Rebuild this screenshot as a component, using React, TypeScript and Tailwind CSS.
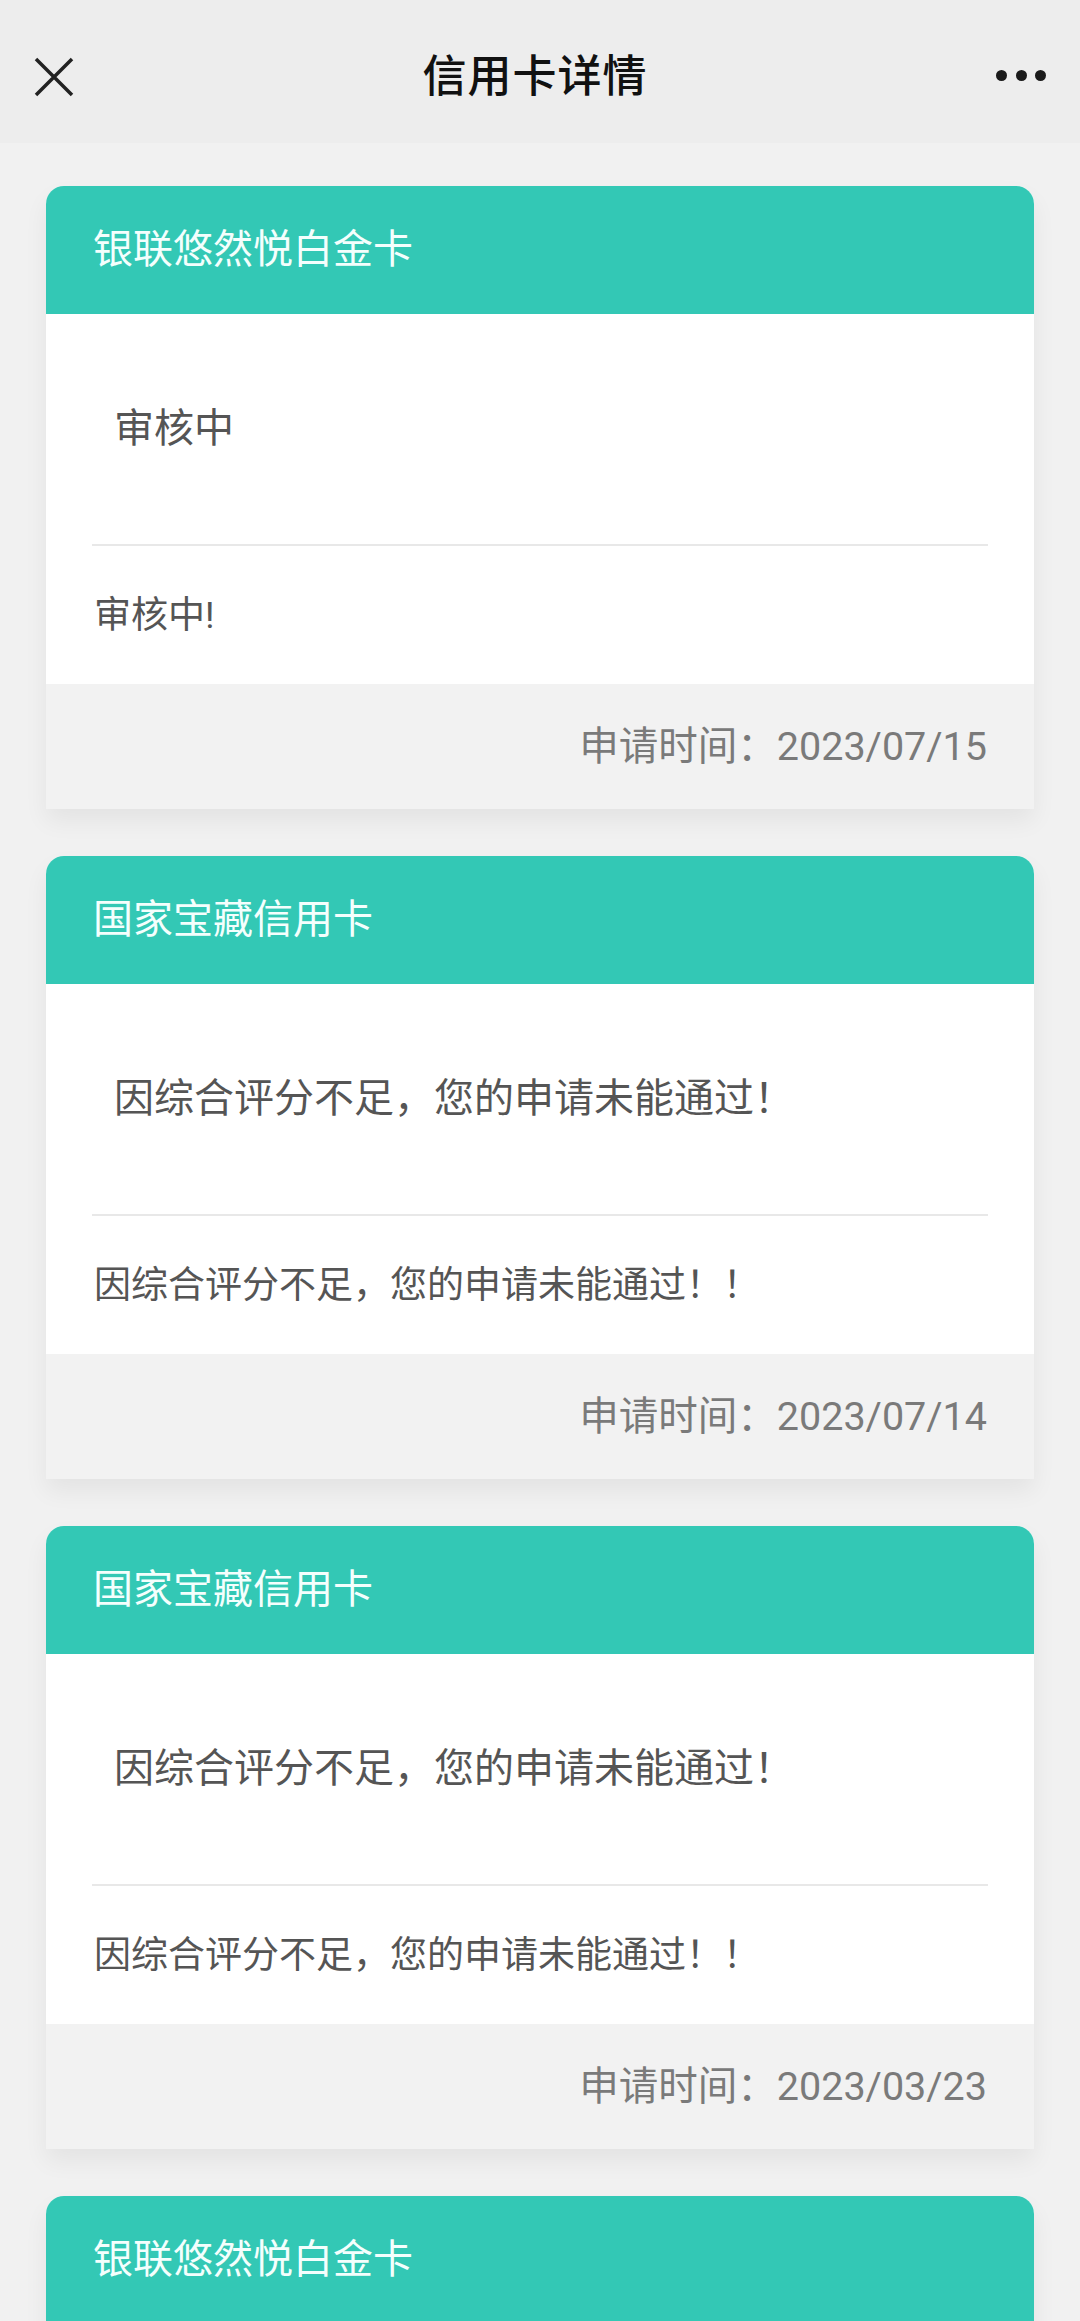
import React from "react";

type Item = {
  name: string;
  status?: string;
  detail?: string;
  date?: string;
};

const items: Item[] = [
  { name: "银联悠然悦白金卡", status: "审核中", detail: "审核中!", date: "2023/07/15" },
  {
    name: "国家宝藏信用卡",
    status: "因综合评分不足，您的申请未能通过！",
    detail: "因综合评分不足，您的申请未能通过！！",
    date: "2023/07/14",
  },
  {
    name: "国家宝藏信用卡",
    status: "因综合评分不足，您的申请未能通过！",
    detail: "因综合评分不足，您的申请未能通过！！",
    date: "2023/03/23",
  },
  { name: "银联悠然悦白金卡" },
];

function Card({ item }: { item: Item }) {
  return (
    <div className="flex flex-col rounded-t-[18px] overflow-hidden bg-white shadow-[0_12px_24px_rgba(0,0,0,0.06)]">
      <div className="h-[128px] shrink-0 bg-[#33c8b5] px-[47px] flex items-center text-[40px] leading-none text-[#f4fffd]">
        {item.name}
      </div>
      {item.status ? (
        <>
          <div className="h-[230px] shrink-0 flex items-center pl-[68px] pr-[46px] text-[40px] leading-none text-[#555555]">
            {item.status}
          </div>
          <div className="mx-[46px] h-[2px] shrink-0 bg-[#e8e8e8]" />
          <div className="h-[138px] shrink-0 flex items-center px-[48px] text-[37px] leading-none text-[#555555]">
            {item.detail}
          </div>
          <div className="h-[125px] shrink-0 bg-[#f2f2f2] flex items-center justify-end pr-[47px] text-[39.5px] leading-none text-[#7a7a7a]">
            申请时间：{item.date}
          </div>
        </>
      ) : (
        <div className="h-[80px] shrink-0 bg-white" />
      )}
    </div>
  );
}

export default function App() {
  return (
    <div
      className="h-[2321px] w-full overflow-hidden bg-[#f1f1f1]"
      style={{ fontFamily: 'Roboto, "Noto Sans CJK SC", sans-serif' }}
    >
      <div className="h-[143px] bg-[#ededed] pt-[10px] px-[34px] flex items-center justify-between">
        <div className="w-[40px] h-[40px] flex items-center justify-center">
          <svg width="40" height="40" viewBox="0 0 40 40" fill="none">
            <path d="M2 2 L38 38 M38 2 L2 38" stroke="#222222" strokeWidth="3.5" strokeLinecap="butt" />
          </svg>
        </div>
        <div className="text-[44px] font-medium text-[#111111] leading-none tracking-[1px]">
          信用卡详情
        </div>
        <div className="w-[50px] h-[40px] flex items-center justify-between -mt-[2px]">
          <span className="w-[11px] h-[11px] rounded-full bg-[#1a1a1a]" />
          <span className="w-[11px] h-[11px] rounded-full bg-[#1a1a1a]" />
          <span className="w-[11px] h-[11px] rounded-full bg-[#1a1a1a]" />
        </div>
      </div>
      <div className="px-[46px] pt-[43px] pb-[47px] flex flex-col gap-[47px]">
        {items.map((it, i) => (
          <Card key={i} item={it} />
        ))}
      </div>
    </div>
  );
}
